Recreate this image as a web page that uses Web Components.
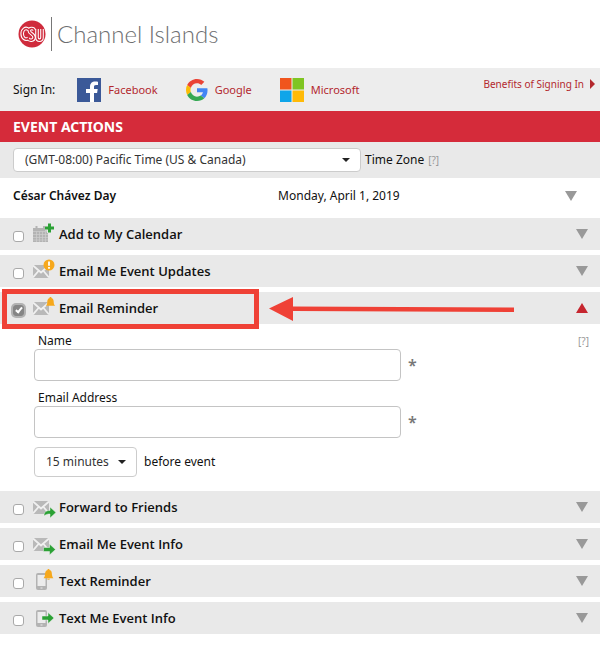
<!DOCTYPE html>
<html lang="en">
<head>
<meta charset="utf-8">
<meta name="viewport" content="width=device-width, initial-scale=1">
<title>Event Actions</title>
<style>
  body {
    margin: 0;
    background: #fff;
    color: #111;
    font: 12px/20px "Noto Sans", "Open Sans", sans-serif;
  }
</style>
</head>
<body>
<event-page></event-page>

<script>
  // Small pictures used by <ui-icon name="...">
  const MAIL = `
    <path fill="#b9b9b9" d="M0 6h16v13H0z"/>
    <path fill="none" stroke="#f0f0f0" stroke-width="1.800" d="M0 6.500l8 7 8-7M0 18.500l5.500-6.500M16 18.500l-5.500-6.500"/>`;
  const PHONE = `
    <path fill="#b3b3b3" d="M5 4h7a2 2 0 0 1 2 2v13a2 2 0 0 1-2 2H5a2 2 0 0 1-2-2V6a2 2 0 0 1 2-2z"/>
    <path fill="#ececec" d="M4.500 6h8v11h-8zM7.500 18.500h2v1h-2z"/>`;
  const CSU_LETTERS = `
    <path d="M10.500 9.500C7.500 7 4.200 9.500 4.200 13.800s3.300 6.800 6.300 4.300"/>
    <path d="M16.300 10.300c-.8-2.600-5-2.300-5 .4 0 3.200 5 3 4.800 6.600-.2 3.500-4.700 3.800-6.200 1"/>
    <path d="M19 9v8.500c0 3.500 5 3.500 5 0V9"/>`;
  const ICONS = {
    csu: ["0 0 28 28", `
      <circle cx="14" cy="14" r="13.500" fill="#cf2b3c"/>
      <g fill="none" stroke="#fff" stroke-width="3.600" stroke-linejoin="round">${CSU_LETTERS}</g>
      <g fill="none" stroke="#cf2b3c" stroke-width="1.500" stroke-linecap="round">${CSU_LETTERS}</g>`],
    facebook: ["0 0 24 24", `
      <path fill="#3b5998" d="M0 0h24v24H0z"/>
      <path fill="#fff" d="M13 24v-9h-4v-4h4V9c0-3.700 2-5.500 5.200-5.500 1.200 0 2.300.1 2.800.2V7h-2c-1.600 0-2 .8-2 2v2h3.700l-.6 4H17v9z"/>`],
    google: ["0 0 48 48", `
      <path fill="#ea4335" d="M24 9.500c3.540 0 6.710 1.220 9.210 3.600l6.850-6.850C35.900 2.380 30.470 0 24 0 14.620 0 6.510 5.380 2.560 13.220l7.980 6.190C12.430 13.720 17.740 9.500 24 9.500z"/>
      <path fill="#4285f4" d="M46.980 24.550c0-1.570-.15-3.090-.38-4.550H24v9.020h12.940c-.58 2.960-2.260 5.480-4.780 7.180l7.730 6c4.510-4.180 7.090-10.360 7.090-17.650z"/>
      <path fill="#fbbc05" d="M10.530 28.590c-.48-1.450-.76-2.990-.76-4.590s.27-3.140.76-4.590l-7.980-6.190C.92 16.460 0 20.120 0 24s.92 7.540 2.560 10.780z"/>
      <path fill="#34a853" d="M24 48c6.480 0 11.930-2.130 15.890-5.810l-7.730-6c-2.150 1.450-4.920 2.300-8.160 2.300-6.260 0-11.570-4.220-13.470-9.910l-7.980 6.190C6.510 42.620 14.620 48 24 48z"/>`],
    microsoft: ["0 0 24 24", `
      <path fill="#f0551d" d="M0 0h11.500v11.500H0z"/><path fill="#7fc522" d="M12.500 0H24v11.500H12.500z"/>
      <path fill="#0fa5e9" d="M0 12.500h11.500V24H0z"/><path fill="#ffba08" d="M12.500 12.500H24V24H12.500z"/>`],
    calendar: ["0 0 24 24", `
      <path fill="#b3b3b3" d="M0 6h15v14H0zM2.500 4h2v3h-2zM10 4h2v3h-2z"/>
      <path stroke="#cfcfcf" stroke-width=".7" d="M0 9.500h15M0 12.500h15M0 15.500h15M0 18h15M3.500 9.500V20M6.500 9.500V20M9.500 9.500V20M12.500 9.500V20"/>
      <path stroke="#e9e9e9" stroke-width="5" d="M16.500 2v9M12 6h9"/>
      <path stroke="#2ba135" stroke-width="3" d="M16.500 1.500v9M12 6h9"/>`],
    updates: ["0 0 24 24", MAIL + `
      <circle cx="16" cy="6" r="5.500" fill="#f6a81c"/>
      <path stroke="#fff" stroke-width="1.800" d="M16 2.500v4.300M16 8v1.800"/>`],
    reminder: ["0 0 24 24", MAIL + `
      <path fill="#f6a81c" d="M17.500 1c.8 0 1 .4 1 .9 2.200.7 2.200 3 2.300 5 .1 1.300.8 2.100 1.400 2.900h-9.400c.6-.8 1.300-1.600 1.400-2.900.1-2 .1-4.300 2.300-5 0-.5.200-.9 1-.9z"/>`],
    forward: ["0 0 24 24", MAIL + `
      <path fill="#2ba135" stroke="#ececec" stroke-width=".5" d="M11 21c0-4 2-5.500 6-5.500V12l6 5.500-6 5.500v-4c-2.500 0-4 .4-6 2z"/>`],
    info: ["0 0 24 24", MAIL + `
      <path fill="#2ba135" stroke="#ececec" stroke-width=".5" d="M10.500 15.500h6V12l6 5.500-6 5.500v-3.500h-6z"/>`],
    textReminder: ["0 0 24 24", PHONE + `
      <path fill="#f6a81c" d="M15.500 0c.8 0 1 .4 1 .9 2.400.7 2.400 3 2.500 4.900.1 1.500.7 2.500 1.400 3.400h-9.800c.7-.9 1.300-1.900 1.400-3.400.1-1.900.1-4.200 2.500-4.900 0-.5.200-.9 1-.9zM14 9.800h3a1.500 1 0 0 1-3 0z"/>`],
    textInfo: ["0 0 24 24", PHONE + `
      <path fill="#2ba135" stroke="#ececec" stroke-width=".5" d="M9 10h6V6.500l6 5.500-6 5.500V14H9z"/>`]
  };

  class UiIcon extends HTMLElement {
    constructor() {
      super();
      this.attachShadow({ mode: "open" });
    }

    connectedCallback() {
      const [viewBox, shapes] = ICONS[this.getAttribute("name")];
      this.shadowRoot.innerHTML = `
        <style>
          :host { display: block; flex: none; width: 24px; height: 24px; }
          svg { display: block; width: 100%; height: 100%; }
        </style>
        <svg viewBox="${viewBox}" aria-hidden="true">${shapes}</svg>
      `;
    }
  }

  class SiteLogo extends HTMLElement {
    constructor() {
      super();
      this.attachShadow({ mode: "open" });
      this.shadowRoot.innerHTML = `
        <style>
          :host {
            display: flex;
            align-items: center;
            height: 68px;
            padding-left: 18px;
            color: #6d6e70;
            font: 300 24px/34px Lato, sans-serif;
          }
          ui-icon { width: 28px; height: 28px; }
          .name { margin-left: 5px; padding-left: 5px; border-left: 1px solid #777; }
        </style>
        <ui-icon name="csu"></ui-icon>
        <span class="name"><slot></slot></span>
      `;
    }
  }

  class SignInBar extends HTMLElement {
    constructor() {
      super();
      this.attachShadow({ mode: "open" });
      this.shadowRoot.innerHTML = `
        <style>
          :host {
            display: flex;
            align-items: center;
            height: 43px;
            padding: 0 5px 0 13px;
            background: #ededed;
          }
          a { color: #b3282d; text-decoration: none; }
          .provider { display: flex; align-items: center; gap: 7px; font-size: 11px; }
          .label { margin-right: 22px; }
          .provider + .provider { margin-left: 28px; }
          [name="google"] { width: 22px; }
          .benefits {
            display: flex;
            align-items: center;
            gap: 6px;
            margin: 0 0 12px auto;
            font-size: 10px;
          }
          .benefits::after {
            content: "";
            border: solid transparent;
            border-width: 5px 0 5px 5px;
            border-left-color: #b3282d;
          }
        </style>
        <span class="label">Sign In:</span>
        <a class="provider" href="#facebook"><ui-icon name="facebook"></ui-icon>Facebook</a>
        <a class="provider" href="#google"><ui-icon name="google"></ui-icon>Google</a>
        <a class="provider" href="#microsoft"><ui-icon name="microsoft"></ui-icon>Microsoft</a>
        <a class="benefits" href="#benefits">Benefits of Signing In</a>
      `;
    }
  }

  class HelpLink extends HTMLElement {
    constructor() {
      super();
      this.attachShadow({ mode: "open" });
      this.shadowRoot.innerHTML = `
        <style>
          :host { display: block; }
          a { display: block; color: #999; font-size: 10px; line-height: 16px; text-decoration: none; }
        </style>
        <a href="#help" title="Help">[?]</a>
      `;
    }
  }

  // Select with its own arrow; takes the single option text and an accessible label
  class DropDown extends HTMLElement {
    constructor() {
      super();
      this.attachShadow({ mode: "open" });
    }

    connectedCallback() {
      this.shadowRoot.innerHTML = `
        <style>
          :host { display: flex; align-items: center; position: relative; }
          select {
            appearance: none;
            box-sizing: border-box;
            width: 100%;
            height: var(--select-height, 30px);
            margin: 0;
            padding: 0 20px 0 11px;
            border: 1px solid #ccc;
            border-radius: 4px;
            background: #fff;
            color: #333;
            font: inherit;
          }
          :host::after {
            content: "";
            position: absolute;
            right: 11px;
            border: solid transparent;
            border-width: 4px 4px 0;
            border-top-color: #222;
            pointer-events: none;
          }
        </style>
        <select aria-label="${this.getAttribute("label")}">
          <option>${this.getAttribute("value")}</option>
        </select>
      `;
    }
  }

  class TimeZoneBar extends HTMLElement {
    constructor() {
      super();
      this.attachShadow({ mode: "open" });
      this.shadowRoot.innerHTML = `
        <style>
          :host {
            display: flex;
            align-items: center;
            gap: 4px;
            height: 36px;
            padding: 0 13px;
            background: #e9e9e9;
          }
          drop-down { width: 348px; --select-height: 24px; }
        </style>
        <drop-down label="Time Zone" value="(GMT-08:00) Pacific Time (US &amp;amp; Canada)"></drop-down>
        <span>Time Zone</span>
        <help-link></help-link>
      `;
    }
  }

  class EventSummary extends HTMLElement {
    constructor() {
      super();
      this.attachShadow({ mode: "open" });
      this.shadowRoot.innerHTML = `
        <style>
          :host {
            display: grid;
            grid-template-columns: 47% 1fr auto;
            align-items: center;
            height: 36px;
            padding: 0 23px 0 13px;
          }
          .title { font-weight: 600; }
          button {
            padding: 0;
            border: solid transparent;
            border-width: 10px 6px 0;
            border-top-color: #999;
            background: none;
          }
        </style>
        <span class="title"><slot name="title"></slot></span>
        <span><slot name="date"></slot></span>
        <button type="button" aria-label="Expand event"></button>
      `;
    }
  }

  class ActionRow extends HTMLElement {
    constructor() {
      super();
      this.attachShadow({ mode: "open" });
    }

    connectedCallback() {
      const open = this.hasAttribute("open");
      this.shadowRoot.innerHTML = `
        <style>
          :host { display: block; }
          .bar {
            position: relative;
            display: flex;
            align-items: center;
            height: 32px;
            padding: 0 12px;
            background: #e9e9e9;
          }
          input {
            appearance: none;
            flex: none;
            width: 11px;
            height: 11px;
            box-sizing: border-box;
            margin: 4px 9px 0 1px;
            border: 1px solid #a9a9a9;
            border-radius: 3px;
            background: #fff;
          }
          input:checked {
            border-color: #858585;
            background: #858585;
            box-shadow: 0 0 0 2px #b2b2b2;
          }
          input:checked::before {
            content: "";
            display: block;
            width: 2px;
            height: 5px;
            margin: 0 auto;
            border: solid #fff;
            border-width: 0 2px 2px 0;
            rotate: 40deg;
          }
          label { margin: 0 auto 0 2px; font: 600 13px/20px "Open Sans", sans-serif; }
          button {
            padding: 0;
            border: solid transparent;
            border-width: 10px 6px 0;
            border-top-color: #999;
            background: none;
          }
          :host([open]) button { border-width: 0 6px 10px; border-bottom-color: #c6262f; }
          ::slotted([slot="mark"]) {
            position: absolute;
            inset: -3px auto -5px 2px;
          }
        </style>
        <div class="bar">
          <input type="checkbox" id="pick" ${open ? "checked" : ""}>
          <ui-icon name="${this.getAttribute("icon")}"></ui-icon>
          <label for="pick">${this.getAttribute("label")}</label>
          <button type="button" aria-label="Toggle ${this.getAttribute("label")}" aria-expanded="${open}"></button>
          <slot name="mark"></slot>
        </div>
        <slot></slot>
      `;
    }
  }

  // Red frame and arrow laid over a row
  class CallOut extends HTMLElement {
    constructor() {
      super();
      this.attachShadow({ mode: "open" });
      this.shadowRoot.innerHTML = `
        <style>
          :host { display: flex; align-items: center; gap: 10px; pointer-events: none; }
          .frame { box-sizing: border-box; width: 257px; height: 100%; border: 5px solid #ef4136; }
          svg { display: block; width: 246px; height: 24px; }
        </style>
        <div class="frame"></div>
        <svg viewBox="0 0 246 24" aria-hidden="true">
          <path fill="#ef4136" d="M0 11.500L24 0v9.500l221 1v4.500l-221-1V24z"/>
        </svg>
      `;
    }
  }

  class FormField extends HTMLElement {
    constructor() {
      super();
      this.attachShadow({ mode: "open" });
    }

    connectedCallback() {
      this.shadowRoot.innerHTML = `
        <style>
          :host { display: block; }
          label { display: block; padding-left: 4px; line-height: 16px; }
          .line { display: flex; gap: 7px; }
          input {
            box-sizing: border-box;
            width: 367px;
            max-width: 90%;
            height: 32px;
            padding: 0 10px;
            border: 1px solid #c4c4c4;
            border-radius: 4px;
            font: inherit;
          }
          .required { padding-top: 4px; color: #777; font-size: 16px; font-weight: 600; line-height: 24px; }
        </style>
        <label for="field">${this.getAttribute("label")}</label>
        <div class="line">
          <input id="field" type="${this.getAttribute("type")}" required>
          <span class="required">*</span>
        </div>
      `;
    }
  }

  class ReminderForm extends HTMLElement {
    constructor() {
      super();
      this.attachShadow({ mode: "open" });
      this.shadowRoot.innerHTML = `
        <style>
          :host {
            display: grid;
            grid-template-columns: 1fr auto;
            padding: 9px 11px 9px 34px;
          }
          .fields { display: grid; gap: 9px; }
          .when { display: flex; align-items: center; gap: 7px; }
          drop-down { width: 103px; }
        </style>
        <div class="fields">
          <form-field label="Name" type="text"></form-field>
          <form-field label="Email Address" type="email"></form-field>
          <div class="when">
            <drop-down label="Reminder time" value="15 minutes"></drop-down>
            <span>before event</span>
          </div>
        </div>
        <help-link></help-link>
      `;
    }
  }

  class EventPage extends HTMLElement {
    constructor() {
      super();
      this.attachShadow({ mode: "open" });
      this.shadowRoot.innerHTML = `
        <style>
          :host { display: block; }
          h1 {
            margin: 0;
            padding: 0 13px;
            background: #d52b3a;
            color: #fff;
            font-size: 14px;
            font-weight: 700;
            line-height: 31px;
          }
          .actions { display: grid; gap: 5px; padding-top: 4px; }
        </style>
        <site-logo>Channel Islands</site-logo>
        <sign-in-bar></sign-in-bar>
        <h1>EVENT ACTIONS</h1>
        <time-zone-bar></time-zone-bar>
        <event-summary>
          <span slot="title">César Chávez Day</span>
          <span slot="date">Monday, April 1, 2019</span>
        </event-summary>
        <div class="actions">
          <action-row icon="calendar" label="Add to My Calendar"></action-row>
          <action-row icon="updates" label="Email Me Event Updates"></action-row>
          <action-row icon="reminder" label="Email Reminder" open>
            <call-out slot="mark"></call-out>
            <reminder-form></reminder-form>
          </action-row>
          <action-row icon="forward" label="Forward to Friends"></action-row>
          <action-row icon="info" label="Email Me Event Info"></action-row>
          <action-row icon="textReminder" label="Text Reminder"></action-row>
          <action-row icon="textInfo" label="Text Me Event Info"></action-row>
        </div>
      `;
    }
  }

  customElements.define("ui-icon", UiIcon);
  customElements.define("site-logo", SiteLogo);
  customElements.define("sign-in-bar", SignInBar);
  customElements.define("help-link", HelpLink);
  customElements.define("drop-down", DropDown);
  customElements.define("time-zone-bar", TimeZoneBar);
  customElements.define("event-summary", EventSummary);
  customElements.define("action-row", ActionRow);
  customElements.define("call-out", CallOut);
  customElements.define("form-field", FormField);
  customElements.define("reminder-form", ReminderForm);
  customElements.define("event-page", EventPage);
</script>
</body>
</html>
